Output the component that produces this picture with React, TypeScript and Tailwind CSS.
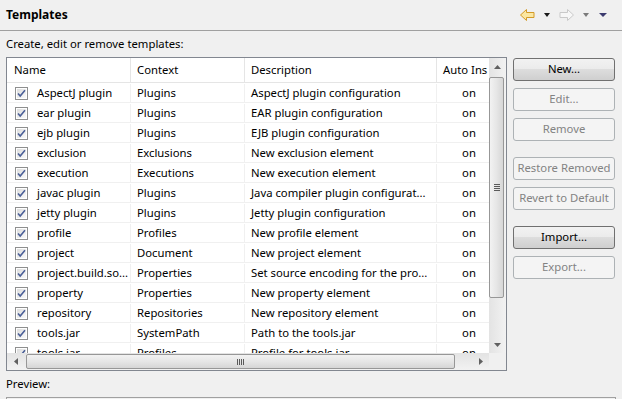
import React from "react";

type Row = { name: string; context: string; description: string };

const rows: Row[] = [
  { name: "AspectJ plugin", context: "Plugins", description: "AspectJ plugin configuration" },
  { name: "ear plugin", context: "Plugins", description: "EAR plugin configuration" },
  { name: "ejb plugin", context: "Plugins", description: "EJB plugin configuration" },
  { name: "exclusion", context: "Exclusions", description: "New exclusion element" },
  { name: "execution", context: "Executions", description: "New execution element" },
  { name: "javac plugin", context: "Plugins", description: "Java compiler plugin configurat..." },
  { name: "jetty plugin", context: "Plugins", description: "Jetty plugin configuration" },
  { name: "profile", context: "Profiles", description: "New profile element" },
  { name: "project", context: "Document", description: "New project element" },
  { name: "project.build.so...", context: "Properties", description: "Set source encoding for the pro..." },
  { name: "property", context: "Properties", description: "New property element" },
  { name: "repository", context: "Repositories", description: "New repository element" },
  { name: "tools.jar", context: "SystemPath", description: "Path to the tools.jar" },
  { name: "tools.jar", context: "Profiles", description: "Profile for tools.jar" },
];

function Checkbox() {
  return (
    <svg width="13" height="13" viewBox="0 0 13 13" className="shrink-0">
      <defs>
        <linearGradient id="cbg" x1="0" y1="0" x2="1" y2="1">
          <stop offset="0" stopColor="#dcdcdc" />
          <stop offset="1" stopColor="#fafafa" />
        </linearGradient>
      </defs>
      <rect x="0.5" y="0.5" width="12" height="12" fill="#fff" stroke="#8e8f8f" />
      <rect x="2" y="2" width="9" height="9" fill="url(#cbg)" />
      <path d="M3 6.5 L5.2 9 L10 3.2" fill="none" stroke="#4a5f97" strokeWidth="1.6" />
    </svg>
  );
}

function Caret({ color, w = 6 }: { color: string; w?: number }) {
  return (
    <svg width={w} height={4} viewBox={`0 0 ${w} 4`}>
      <path d={`M0 0 H${w} L${w / 2} 4 Z`} fill={color} />
    </svg>
  );
}

function BackArrow() {
  return (
    <svg width="15" height="12" viewBox="0 0 15 12">
      <path d="M0.5 6 L6.5 0.5 V3.5 H14 V8.5 H6.5 V11.5 Z" fill="#fbe7a1" stroke="#d39a28" />
    </svg>
  );
}

function ForwardArrow() {
  return (
    <svg width="15" height="12" viewBox="0 0 15 12">
      <path d="M14.5 6 L8.5 0.5 V3.5 H1 V8.5 H8.5 V11.5 Z" fill="#f7f7f7" stroke="#c9c9c9" />
    </svg>
  );
}

function Button({ label, enabled }: { label: string; enabled?: boolean }) {
  return enabled ? (
    <div className="flex h-[23px] w-[102px] items-center justify-center rounded-[3px] border border-[#707070] bg-[linear-gradient(#f2f2f2_0%,#ebebeb_50%,#dddddd_50%,#cfcfcf_100%)] text-black">
      {label}
    </div>
  ) : (
    <div className="flex h-[23px] w-[102px] items-center justify-center rounded-[3px] border border-[#adb2b5] bg-[#f4f4f4] text-[#838383]">
      {label}
    </div>
  );
}

export default function App() {
  return (
    <div className="h-[399px] w-[622px] overflow-hidden bg-[#f0f0f0] text-[11.3px] text-black [font-family:'Noto_Sans',sans-serif]">
      <div className="flex h-[31px] items-center justify-between border-b border-[#a0a0a0] pl-[6px] pr-[15px]">
        <span className="text-[12px] font-bold">Templates</span>
        <div className="flex items-center">
          <BackArrow />
          <span className="ml-[9px]"><Caret color="#1a1a1a" w={6} /></span>
          <span className="ml-[9px]"><ForwardArrow /></span>
          <span className="ml-[9px]"><Caret color="#7a7a7a" w={6} /></span>
          <span className="ml-[10px]"><Caret color="#3b3a6e" w={8} /></span>
        </div>
      </div>

      <div className="pl-[6px]">
        <div className="flex h-[26px] items-center">Create, edit or remove templates:</div>

        <div className="flex">
          <div className="flex h-[314px] w-[501px] flex-col border border-[#828790] bg-white">
            <div className="flex h-[295px]">
              <div className="w-[482px] overflow-hidden">
                <div className="flex h-[25px] border-b border-[#e5e5e5]">
                  <div className="flex w-[124px] shrink-0 items-center border-r border-[#e5e5e5] pl-[7px]">Name</div>
                  <div className="flex w-[114px] shrink-0 items-center border-r border-[#e5e5e5] pl-[6px]">Context</div>
                  <div className="flex w-[192px] shrink-0 items-center border-r border-[#e5e5e5] pl-[6px]">Description</div>
                  <div className="flex w-[60px] shrink-0 items-center whitespace-nowrap pl-[6px]">Auto Ins</div>
                </div>
                {rows.map((row, i) => (
                  <div key={i} className="flex h-[20px] border-b border-[#f0f0f0] pt-[1px]">
                    <div className="flex w-[124px] shrink-0 items-center gap-[9px] whitespace-nowrap border-r border-[#f0f0f0] pl-[8px]">
                      <Checkbox />
                      <span>{row.name}</span>
                    </div>
                    <div className="flex w-[114px] shrink-0 items-center whitespace-nowrap border-r border-[#f0f0f0] pl-[6px]">
                      {row.context}
                    </div>
                    <div className="flex w-[192px] shrink-0 items-center overflow-hidden whitespace-nowrap border-r border-[#f0f0f0] pl-[6px]">
                      {row.description}
                    </div>
                    <div className="flex w-[64px] shrink-0 items-center justify-center">on</div>
                  </div>
                ))}
              </div>

              {/* vertical scrollbar */}
              <div className="flex w-[17px] flex-col bg-[linear-gradient(90deg,#e3e3e3,#f2f2f2)]">
                <div className="flex h-[17px] items-center justify-center">
                  <svg width="7" height="4" viewBox="0 0 7 4"><path d="M0 4 L3.5 0 L7 4 Z" fill="#606060" /></svg>
                </div>
                <div className="mt-[2px] flex h-[221px] w-[15px] items-center justify-center rounded-[2px] border border-[#979797] bg-[linear-gradient(90deg,#f2f2f2,#e6e6e6_50%,#d6d6d6)]">
                  <div className="flex flex-col gap-[1px]">
                    <div className="h-px w-[6px] bg-[#5a5a5a]" />
                    <div className="h-px w-[6px] bg-[#5a5a5a]" />
                    <div className="h-px w-[6px] bg-[#5a5a5a]" />
                    <div className="h-px w-[6px] bg-[#5a5a5a]" />
                  </div>
                </div>
                <div className="flex-1" />
                <div className="flex h-[17px] items-center justify-center">
                  <svg width="7" height="4" viewBox="0 0 7 4"><path d="M0 0 L7 0 L3.5 4 Z" fill="#606060" /></svg>
                </div>
              </div>
            </div>

            <div className="flex h-[17px]">
              {/* horizontal scrollbar */}
              <div className="flex w-[482px] items-center bg-[linear-gradient(#e3e3e3,#f2f2f2)]">
                <div className="flex h-[17px] w-[17px] items-center justify-center">
                  <svg width="4" height="7" viewBox="0 0 4 7"><path d="M4 0 L0 3.5 L4 7 Z" fill="#606060" /></svg>
                </div>
                <div className="ml-[2px] flex h-[15px] w-[429px] items-center justify-center rounded-[2px] border border-[#979797] bg-[linear-gradient(#f2f2f2,#e6e6e6_50%,#d6d6d6)]">
                  <div className="flex gap-[1px]">
                    <div className="h-[6px] w-px bg-[#5a5a5a]" />
                    <div className="h-[6px] w-px bg-[#5a5a5a]" />
                    <div className="h-[6px] w-px bg-[#5a5a5a]" />
                    <div className="h-[6px] w-px bg-[#5a5a5a]" />
                  </div>
                </div>
                <div className="flex-1" />
                <div className="flex h-[17px] w-[17px] items-center justify-center">
                  <svg width="4" height="7" viewBox="0 0 4 7"><path d="M0 0 L4 3.5 L0 7 Z" fill="#606060" /></svg>
                </div>
              </div>
              <div className="w-[17px] bg-[#f0f0f0]" />
            </div>
          </div>

          <div className="ml-[6px] mt-[1px] flex flex-col">
            <Button label="New..." enabled />
            <div className="mt-[7px]"><Button label="Edit..." /></div>
            <div className="mt-[7px]"><Button label="Remove" /></div>
            <div className="mt-[16px]"><Button label="Restore Removed" /></div>
            <div className="mt-[7px]"><Button label="Revert to Default" /></div>
            <div className="mt-[16px]"><Button label="Import..." enabled /></div>
            <div className="mt-[7px]"><Button label="Export..." /></div>
          </div>
        </div>

        <div className="flex h-[26px] items-center">Preview:</div>
        <div className="h-[40px] w-[610px] border border-[#a0a0a0] bg-[#f0f0f0]" />
      </div>
    </div>
  );
}
